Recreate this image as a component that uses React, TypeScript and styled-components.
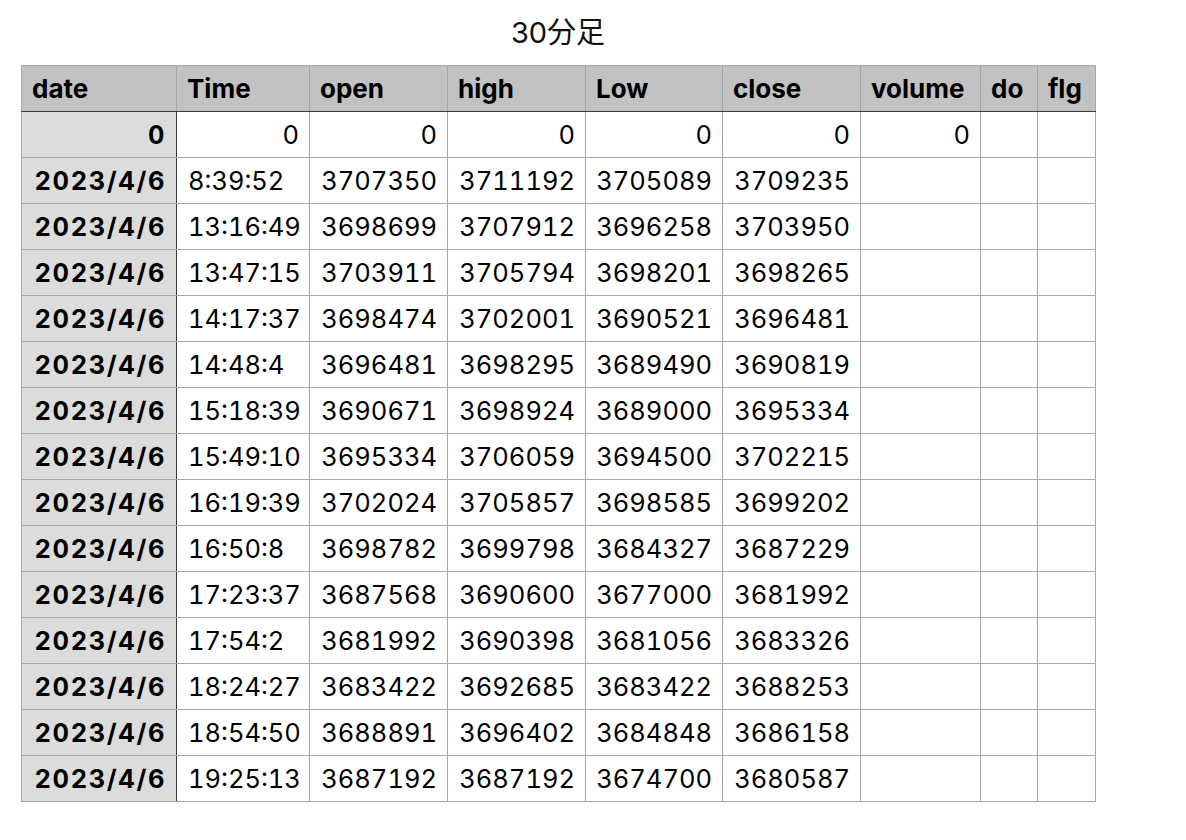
import React from "react";
import styled, { createGlobalStyle } from "styled-components";

const Global = createGlobalStyle`
  html, body { margin: 0; padding: 0; background: #ffffff; }
  body { font-family: Inter, "Noto Sans CJK JP", sans-serif; color: #000; }
`;

const Page = styled.div`
  padding: 0 0 0 21px;
  width: 1074px;
`;

const Title = styled.div`
  height: 65px;
  line-height: 66px;
  text-align: center;
  font-family: Inter, "Noto Sans CJK JP", sans-serif;
  font-size: 29px;
  color: #111;
`;

const Table = styled.table`
  border-collapse: collapse;
  table-layout: fixed;
  width: 1074px;
  font-family: Inter, "Noto Sans CJK JP", sans-serif;
  font-size: 25.5px;
  font-variant-numeric: tabular-nums;
`;

const Row = styled.tr`
  height: 46px;
`;

const HeadCell = styled.th`
  background: #c1c2c1;
  border: 1px solid #a7a7a7;
  border-bottom: 1px solid #3a3a3a;
  text-align: left;
  padding: 0 10px;
  font-size: 26px;
  font-weight: 700;
  white-space: nowrap;
  overflow: hidden;
`;

const DateCell = styled.td`
  background: #dcdcdc;
  border: 1px solid #a7a7a7;
  border-right: 1px solid #3a3a3a;
  text-align: right;
  padding: 0 10px 0 8px;
  font-weight: 700;
  letter-spacing: 1.6px;
  white-space: nowrap;
`;

const Cell = styled.td<{ $align?: "left" | "right" }>`
  background: #ffffff;
  border: 1px solid #a7a7a7;
  text-align: ${(p) => p.$align ?? "right"};
  padding: ${(p) => (p.$align === "left" ? "0 6px 0 11px" : "0 10px 0 6px")};
  font-weight: 400;
  white-space: nowrap;
  overflow: hidden;
`;

const widths = [155, 133, 138, 138, 137, 138, 120, 57, 58];
const headers = ["date", "Time", "open", "high", "Low", "close", "volume", "do", "flg"];

const rows: string[][] = [
  ["8:39:52", "3707350", "3711192", "3705089", "3709235"],
  ["13:16:49", "3698699", "3707912", "3696258", "3703950"],
  ["13:47:15", "3703911", "3705794", "3698201", "3698265"],
  ["14:17:37", "3698474", "3702001", "3690521", "3696481"],
  ["14:48:4", "3696481", "3698295", "3689490", "3690819"],
  ["15:18:39", "3690671", "3698924", "3689000", "3695334"],
  ["15:49:10", "3695334", "3706059", "3694500", "3702215"],
  ["16:19:39", "3702024", "3705857", "3698585", "3699202"],
  ["16:50:8", "3698782", "3699798", "3684327", "3687229"],
  ["17:23:37", "3687568", "3690600", "3677000", "3681992"],
  ["17:54:2", "3681992", "3690398", "3681056", "3683326"],
  ["18:24:27", "3683422", "3692685", "3683422", "3688253"],
  ["18:54:50", "3688891", "3696402", "3684848", "3686158"],
  ["19:25:13", "3687192", "3687192", "3674700", "3680587"],
];

export default function App() {
  return (
    <Page>
      <Global />
      <Title>30分足</Title>
      <Table>
        <colgroup>
          {widths.map((w, i) => (
            <col key={i} style={{ width: w }} />
          ))}
        </colgroup>
        <thead>
          <Row>
            {headers.map((h) => (
              <HeadCell key={h}>{h}</HeadCell>
            ))}
          </Row>
        </thead>
        <tbody>
          <Row>
            <DateCell>0</DateCell>
            <Cell>0</Cell>
            <Cell>0</Cell>
            <Cell>0</Cell>
            <Cell>0</Cell>
            <Cell>0</Cell>
            <Cell>0</Cell>
            <Cell />
            <Cell />
          </Row>
          {rows.map((r, i) => (
            <Row key={i}>
              <DateCell>2023/4/6</DateCell>
              <Cell $align="left">{r[0]}</Cell>
              <Cell>{r[1]}</Cell>
              <Cell>{r[2]}</Cell>
              <Cell>{r[3]}</Cell>
              <Cell>{r[4]}</Cell>
              <Cell />
              <Cell />
              <Cell />
            </Row>
          ))}
        </tbody>
      </Table>
    </Page>
  );
}
